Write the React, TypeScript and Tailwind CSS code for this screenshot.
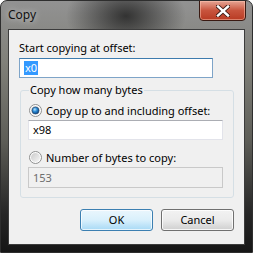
import React from "react";

const font = { fontFamily: '"Segoe UI", "Noto Sans", "Liberation Sans", sans-serif' };

function Radio({ checked }: { checked: boolean }) {
  return (
    <svg width="13" height="13" viewBox="0 0 13 13" className="shrink-0">
      <defs>
        <linearGradient id={checked ? "rbg1" : "rbg2"} x1="0" y1="0" x2="1" y2="1">
          <stop offset="0" stopColor="#cbcbcb" />
          <stop offset="1" stopColor="#f6f6f6" />
        </linearGradient>
        <radialGradient id="dot" cx="0.4" cy="0.35" r="0.7">
          <stop offset="0" stopColor="#b7e3ff" />
          <stop offset="0.45" stopColor="#2a8ad4" />
          <stop offset="1" stopColor="#0a3d7a" />
        </radialGradient>
      </defs>
      <circle cx="6.5" cy="6.5" r="6" fill="#fefefe" stroke="#8e8f8f" strokeWidth="1" />
      <circle cx="6.5" cy="6.5" r="4.5" fill={`url(#${checked ? "rbg1" : "rbg2"})`} />
      {checked && <circle cx="6.5" cy="6.5" r="3.5" fill="url(#dot)" stroke="#1e3f66" strokeWidth="0.6" />}
    </svg>
  );
}

export default function App() {
  return (
    <div
      className="w-[253px] h-[253px] relative overflow-hidden rounded-t-[7px] border border-[#2e2e2e] flex flex-col"
      style={{
        ...font,
        background:
          "radial-gradient(ellipse 60px 40px at 125px 15px, rgba(20,20,20,0.75), rgba(20,20,20,0) 100%), linear-gradient(to bottom, #929292 0%, #808079 25%, #5e5e58 55%, #262626 85%, #161616 100%)",
      }}
    >
      <div className="h-[28px] flex items-start justify-between shrink-0">
        <div className="pl-[7px] pt-[6px] text-[12px] leading-[15px] text-[#111] [text-shadow:0_0_6px_rgba(255,255,255,0.8)]">
          Copy
        </div>
        <div className="mr-[6px] -mt-px w-[47px] h-[21px] rounded-b-[4px] border border-[#3a1a12] bg-gradient-to-b from-[#e5a494] via-[#c8543d] to-[#b83a22] flex items-center justify-center shadow-[inset_0_0_0_1px_rgba(255,200,180,0.5)]">
          <svg width="14" height="12" viewBox="0 0 14 12">
            <path d="M2 1.5 L12 10.5 M12 1.5 L2 10.5" stroke="#3b1a14" strokeWidth="4.2" strokeLinecap="square" />
            <path d="M2 1.5 L12 10.5 M12 1.5 L2 10.5" stroke="#ffffff" strokeWidth="2.4" strokeLinecap="square" />
          </svg>
        </div>
      </div>
      <div className="mx-[7px] mb-[7px] flex-1 border border-[#3c3c3c] bg-[#f0f0f0] text-[11px] text-black flex flex-col">
        <div className="pl-[10px] pt-[10px] leading-[15px]">Start copying at offset:</div>
        <div className="ml-[10px] mt-[3px] w-[194px] h-[20px] border border-[#7ea4c8] border-t-[#3d7bad] bg-white flex items-center pl-[4px]">
          <span className="bg-[#3399ff] text-white leading-[14px] px-px">x0</span>
        </div>
        <fieldset className="ml-[11px] mt-[5px] w-[214px] h-[115px] border border-[#d5dfe5] rounded-[3px] px-[7px] pb-0">
          <legend className="ml-[1px] px-[1px] leading-[14px]">Copy how many bytes</legend>
          <div className="mt-[6px] ml-[1px] flex items-center gap-[4px] leading-[15px]">
            <Radio checked />
            <span>Copy up to and including offset:</span>
          </div>
          <div className="mt-[2px] w-[195px] h-[20px] border border-[#e2e3ea] border-t-[#abadb3] bg-white flex items-center pl-[4px] leading-[14px]">
            x98
          </div>
          <div className="mt-[10px] ml-[1px] flex items-center gap-[4px] leading-[15px]">
            <Radio checked={false} />
            <span>Number of bytes to copy:</span>
          </div>
          <div className="mt-[2px] w-[195px] h-[21px] border border-[#c9c9c9] bg-[#f0f0f0] flex items-center pl-[4px] text-[#6d6d6d] leading-[14px]">
            153
          </div>
        </fieldset>
        <div className="mt-[11px] ml-[71px] flex gap-[8px]">
          <div className="w-[73px] h-[22px] rounded-[3px] border border-[#3c7fb1] bg-gradient-to-b from-[#eaf6fd] via-[#d9f0fc] to-[#a7d9f5] flex items-center justify-center shadow-[inset_0_0_0_1px_rgba(255,255,255,0.7)]">
            OK
          </div>
          <div className="w-[73px] h-[22px] rounded-[3px] border border-[#707070] bg-gradient-to-b from-[#f2f2f2] via-[#ebebeb] to-[#cfcfcf] flex items-center justify-center shadow-[inset_0_0_0_1px_rgba(255,255,255,0.8)]">
            Cancel
          </div>
        </div>
      </div>
    </div>
  );
}
